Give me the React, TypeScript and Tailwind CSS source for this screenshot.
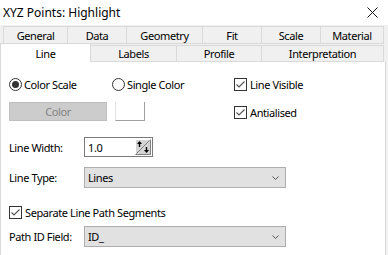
import React from "react";

function Radio({ checked }: { checked: boolean }) {
  return (
    <span className="w-[13px] h-[13px] rounded-full border border-[#333333] bg-white flex items-center justify-center shrink-0">
      {checked && <span className="w-[7px] h-[7px] rounded-full bg-[#333333]" />}
    </span>
  );
}

function Check() {
  return (
    <span className="w-[13px] h-[13px] border border-[#333333] bg-white flex items-center justify-center shrink-0">
      <svg width="11" height="11" viewBox="0 0 11 11">
        <path d="M1.5 5.5 L4 8 L9.5 2.5" fill="none" stroke="#555555" strokeWidth="1.2" />
      </svg>
    </span>
  );
}

function Select({ value }: { value: string }) {
  return (
    <div className="w-[202px] h-[21px] bg-[#e1e1e1] border border-[#adadad] flex items-center justify-between pl-[3px] pr-[6px]">
      <span>{value}</span>
      <svg width="7" height="4" viewBox="0 0 7 4">
        <path d="M0.5 0.5 L3.5 3.5 L6.5 0.5" fill="none" stroke="#555555" strokeWidth="1" />
      </svg>
    </div>
  );
}

function Tab({ label, w, h }: { label: string; w: string; h: string }) {
  return (
    <div className={`${w} ${h} -ml-px first:ml-0 bg-[#f0f0f0] border border-[#d9d9d9] flex items-center justify-center`}>
      {label}
    </div>
  );
}

export default function App() {
  return (
    <div className="w-[388px] h-[255px] bg-[#f0f0f0] flex flex-col overflow-hidden text-[11px] leading-none tracking-[-0.4px] text-black font-['Noto_Sans',sans-serif]">
      <div className="h-[25px] bg-white flex items-center justify-between pl-[3px] pr-[10px] shrink-0">
        <span className="text-[12px] tracking-normal">XYZ Points: Highlight</span>
        <svg width="11" height="11" viewBox="0 0 11 11">
          <path d="M0.5 0.5 L10.5 10.5 M10.5 0.5 L0.5 10.5" stroke="#111111" strokeWidth="1" />
        </svg>
      </div>

      <div className="mt-[1px] ml-[3px] flex h-[18px] shrink-0">
        <Tab label="General" w="w-[65px]" h="h-[18px]" />
        <Tab label="Data" w="w-[60px]" h="h-[18px]" />
        <Tab label="Geometry" w="w-[77px]" h="h-[18px]" />
        <Tab label="Fit" w="w-[60px]" h="h-[18px]" />
        <Tab label="Scale" w="w-[60px]" h="h-[18px]" />
        <Tab label="Material" w="w-[64px]" h="h-[18px]" />
      </div>

      <div className="flex items-end h-[18px] shrink-0">
        <div className="w-[91px] h-[19px] bg-white border-t border-l border-r border-[#d9d9d9] flex items-center justify-center relative z-10">
          Line
        </div>
        <div className="flex -ml-px">
          <Tab label="Labels" w="w-[87px]" h="h-[17px]" />
          <Tab label="Profile" w="w-[86px]" h="h-[17px]" />
          <Tab label="Interpretation" w="w-[123px]" h="h-[17px]" />
        </div>
      </div>

      <div className="w-[386px] flex-1 bg-white border-l border-r border-[#d9d9d9] pl-[8px]">
        <div className="flex pt-[15px]">
          <div className="w-[225px]">
            <div className="flex items-center h-[14px]">
              <label className="w-[103px] flex items-center gap-[2px]">
                <Radio checked />
                <span>Color Scale</span>
              </label>
              <label className="flex items-center gap-[2px]">
                <Radio checked={false} />
                <span>Single Color</span>
              </label>
            </div>
            <div className="flex mt-[11px]">
              <div className="w-[98px] h-[19px] bg-[#cccccc] border border-[#bfbfbf] flex items-center justify-center text-[#838383]">
                Color
              </div>
              <div className="ml-[8px] w-[30px] h-[19px] bg-white border-r border-b border-l border-r-[#a0a0a0] border-b-[#a0a0a0] border-l-[#e3e3e3]" />
            </div>
          </div>
          <div className="pt-[1px]">
            <label className="flex items-center gap-[3px] h-[13px]">
              <Check />
              <span>Line Visible</span>
            </label>
            <label className="flex items-center gap-[3px] h-[13px] mt-[15px]">
              <Check />
              <span>Antialised</span>
            </label>
          </div>
        </div>

        <div className="flex items-center mt-[16px]">
          <span className="w-[75px]">Line Width:</span>
          <div className="w-[69px] h-[20px] border border-[#7a7a7a] flex items-center justify-between pl-[3px] pr-[1px]">
            <span>1.0</span>
            <svg width="16" height="16" viewBox="0 0 16 16">
              <rect x="0" y="0" width="16" height="16" fill="#d4d4d4" />
              <path d="M0.5 15.5 L0.5 0.5 L15.5 0.5" fill="none" stroke="#ffffff" strokeWidth="1" />
              <path d="M0.5 15.5 L15.5 15.5 L15.5 0.5" fill="none" stroke="#808080" strokeWidth="1" />
              <path d="M1.5 14.5 L14.5 1.5" stroke="#808080" strokeWidth="1" />
              <path d="M4.5 3 L4.5 8" stroke="#000000" strokeWidth="1.4" />
              <path d="M2 5 L4.5 2 L7 5 Z" fill="#000000" />
              <path d="M11.5 8 L11.5 13" stroke="#000000" strokeWidth="1.4" />
              <path d="M9 11 L11.5 14 L14 11 Z" fill="#000000" />
            </svg>
          </div>
        </div>

        <div className="flex items-center mt-[10px]">
          <span className="w-[75px]">Line Type:</span>
          <Select value="Lines" />
        </div>

        <label className="flex items-center gap-[3px] h-[13px] mt-[18px]">
          <Check />
          <span>Separate Line Path Segments</span>
        </label>

        <div className="flex items-center mt-[7px]">
          <span className="w-[75px]">Path ID Field:</span>
          <Select value="ID_" />
        </div>
      </div>
    </div>
  );
}
